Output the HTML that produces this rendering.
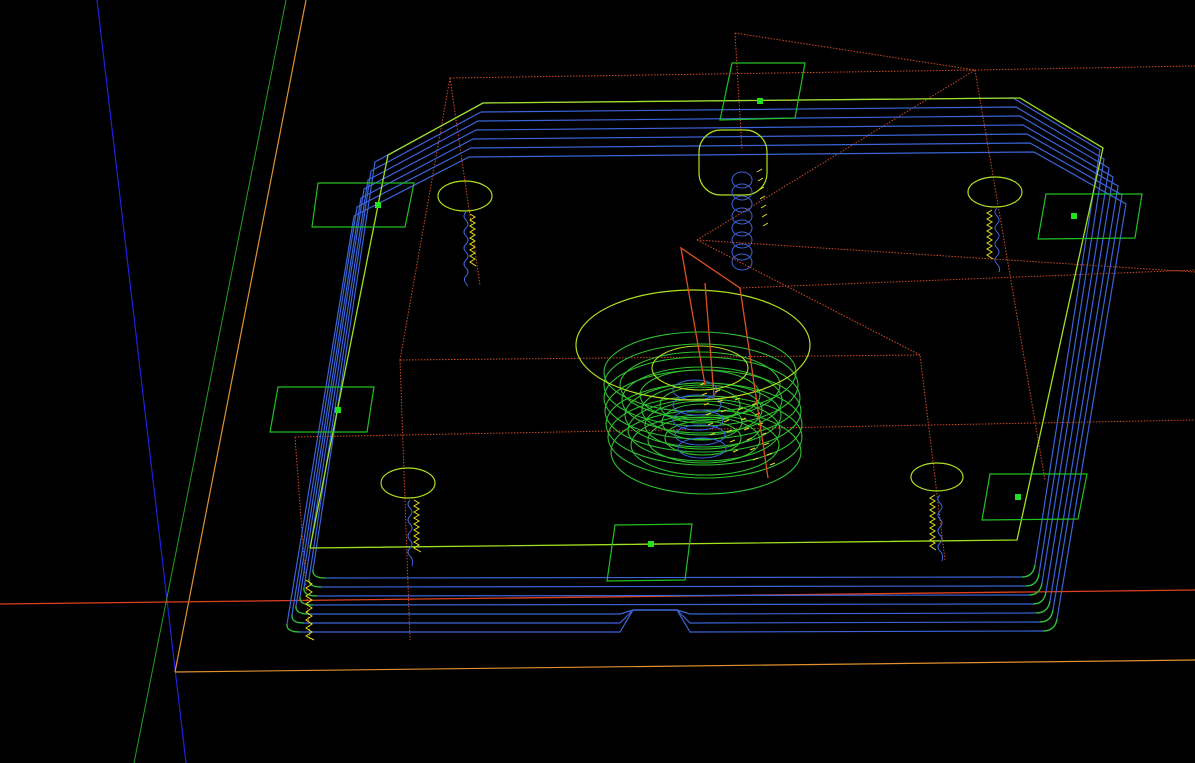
<!DOCTYPE html>
<html><head><meta charset="utf-8"><style>html,body{margin:0;padding:0;background:#000;overflow:hidden}svg{display:block}</style></head>
<body>
<svg width="1195" height="763" viewBox="0 0 1195 763" xmlns="http://www.w3.org/2000/svg" fill="none">
<!-- axes -->
<line x1="97" y1="0" x2="186" y2="763" stroke="#2020e0" stroke-width="1.2"/>
<line x1="286" y1="0" x2="134" y2="763" stroke="#20a020" stroke-width="1"/>
<line x1="306" y1="0" x2="175" y2="672" stroke="#e09030" stroke-width="1.2"/>
<line x1="175" y1="672" x2="1195" y2="660" stroke="#e09030" stroke-width="1.2"/>
<!-- stock dotted -->
<g stroke="#d04a20" stroke-width="1" stroke-dasharray="1.5 1.5">
<polyline points="450,78 975,70 1195,66"/>
<line x1="450" y1="78" x2="400" y2="360"/>
<line x1="450" y1="78" x2="480" y2="285"/>
<polyline points="400,360 920,355"/>
<line x1="975" y1="70" x2="1045" y2="480"/>
<line x1="735" y1="33" x2="975" y2="70"/>
<line x1="735" y1="33" x2="742" y2="150"/>
<polyline points="697,240 975,70"/>
<polyline points="697,240 920,355 945,560"/>
<line x1="697" y1="240" x2="1195" y2="272"/>
<line x1="740" y1="288" x2="1195" y2="270"/>
<line x1="295" y1="437" x2="1195" y2="420"/>
<line x1="295" y1="437" x2="310" y2="640"/>
<line x1="400" y1="360" x2="410" y2="640"/>
</g>
<line x1="0" y1="604" x2="1195" y2="590" stroke="#e04020" stroke-width="1.3"/>
<!-- contour layers -->
<g stroke="#3a64d8" stroke-width="1.2">
<path d="M483,103 L1013,98 L1100,150 L1035,565 Q1033,577 1022,577 L325,578 Q312,578 313,570 L375,162 Z"/>
<path d="M481,112 L1016,107 L1104,159 L1039,574 Q1037,586 1026,586 L321,587 Q308,587 309,579 L371,171 Z"/>
<path d="M478,121 L1020,116 L1109,168 L1042,583 Q1040,595 1029,595 L317,596 Q303,596 304,588 L368,180 Z"/>
<path d="M476,130 L1023,125 L1113,177 L1046,592 Q1044,604 1033,604 L313,605 Q299,605 300,597 L364,189 Z"/>
<path d="M473,139 L1027,134 L1118,186 L1050,601 Q1048,613 1036,613 L690,614 L677,610 L633,610 L620,614 L309,614 Q295,614 296,606 L361,198 Z"/>
<path d="M471,148 L1030,143 L1122,195 L1053,610 Q1051,622 1040,622 L690,623 L677,610 L633,610 L620,623 L304,623 Q291,623 292,615 L357,207 Z"/>
<path d="M469,157 L1034,152 L1126,204 L1057,619 Q1055,631 1043,631 L690,632 L677,610 L633,610 L620,632 L300,632 Q286,632 287,624 L354,216 Z"/>
</g>
<!-- green corners -->
<g stroke="#30c030" stroke-width="1.3">
<path d="M1022,577 Q1033,577 1035,565"/><path d="M1026,586 Q1037,586 1039,574"/><path d="M1029,595 Q1040,595 1042,583"/><path d="M1033,604 Q1044,604 1046,592"/><path d="M1036,613 Q1048,613 1050,601"/><path d="M1040,622 Q1051,622 1053,610"/><path d="M1043,631 Q1055,631 1057,619"/>
<path d="M325,578 Q312,578 313,570"/><path d="M321,587 Q308,587 309,579"/><path d="M317,596 Q303,596 304,588"/><path d="M313,605 Q299,605 300,597"/><path d="M309,614 Q295,614 296,606"/><path d="M304,623 Q291,623 292,615"/><path d="M300,632 Q286,632 287,624"/>
</g>
<polyline points="306,580 312,584 306,588 312,592 306,596 312,600 306,604 312,608 306,612 312,616 306,620 312,624 306,628 312,632 306,636 314,640" stroke="#e0e020" stroke-width="1"/>
<!-- top profile yellow-green -->
<path d="M310,548 L1017,540 L1103,148 L1020,98 L483,103 L388,155 L310,548" stroke="#a0e020" stroke-width="1.3"/>
<!-- tabs -->
<g stroke="#20c020" stroke-width="1.2">
<polygon points="732,63 805,63 795,118 720,120"/>
<polygon points="318,183 414,183 405,227 312,227"/>
<polygon points="1046,194 1142,194 1135,238 1038,239"/>
<polygon points="278,387 374,387 367,432 270,432"/>
<polygon points="990,474 1087,474 1078,519 982,520"/>
<polygon points="615,525 692,524 685,580 607,581"/>
</g>
<g fill="#20e020">
<rect x="757" y="98" width="6" height="6"/><rect x="375" y="202" width="6" height="6"/><rect x="1071" y="213" width="6" height="6"/><rect x="335" y="407" width="6" height="6"/><rect x="1015" y="494" width="6" height="6"/><rect x="648" y="541" width="6" height="6"/>
</g>
<!-- drill ellipses -->
<g stroke="#b0e020" stroke-width="1.2">
<ellipse cx="465" cy="196" rx="27" ry="15"/>
<ellipse cx="995" cy="192" rx="27" ry="15"/>
<ellipse cx="408" cy="483" rx="27" ry="15"/>
<ellipse cx="937" cy="477" rx="26" ry="14"/>
<rect x="699" y="130" width="68" height="65" rx="22"/>
</g>
<g stroke="#3a64d8" stroke-width="1">
<path d="M466,212 q-4,4 0,8 q4,4 0,8 q-4,4 0,8 q4,4 0,8 q-4,4 0,8 q4,4 0,8 q-4,4 0,8 q4,4 0,8 q-4,4 2,10"/>
<path d="M997,208 q-4,4 0,8 q4,4 0,8 q-4,4 0,8 q4,4 0,8 q-4,4 0,8 q4,4 0,8 q-4,4 0,8 q4,4 2,8"/>
<path d="M410,500 q-4,4 0,8 q4,4 0,8 q-4,4 0,8 q4,4 0,8 q-4,4 0,8 q4,4 0,8 q-4,4 0,8 q4,4 2,10"/>
<path d="M940,495 q-4,4 0,8 q4,4 0,8 q-4,4 0,8 q4,4 0,8 q-4,4 0,8 q4,4 0,8 q-4,4 0,8 q4,4 2,10"/>
<ellipse cx="742" cy="180" rx="10" ry="8"/><ellipse cx="742" cy="192" rx="10" ry="8"/><ellipse cx="742" cy="204" rx="10" ry="8"/><ellipse cx="742" cy="216" rx="10" ry="8"/><ellipse cx="742" cy="228" rx="10" ry="8"/><ellipse cx="742" cy="240" rx="10" ry="8"/><ellipse cx="742" cy="252" rx="10" ry="8"/><ellipse cx="742" cy="262" rx="10" ry="8"/>
</g>
<g stroke="#e0e020" stroke-width="1">
<path d="M470,214 l5,3 l-5,3 l5,3 l-5,3 l5,3 l-5,3 l5,3 l-5,3 l5,3 l-5,3 l5,3 l-5,3 l5,3 l-5,3 l5,3 l-5,3 l6,4"/>
<path d="M992,210 l-5,3 l5,3 l-5,3 l5,3 l-5,3 l5,3 l-5,3 l5,3 l-5,3 l5,3 l-5,3 l5,3 l-5,3 l5,3 l-5,3 l6,4"/>
<path d="M414,500 l5,3 l-5,3 l5,3 l-5,3 l5,3 l-5,3 l5,3 l-5,3 l5,3 l-5,3 l5,3 l-5,3 l5,3 l-5,3 l5,3 l-5,3 l7,4"/>
<path d="M935,495 l-5,3 l5,3 l-5,3 l5,3 l-5,3 l5,3 l-5,3 l5,3 l-5,3 l5,3 l-5,3 l5,3 l-5,3 l5,3 l-5,3 l5,3 l-5,3 l6,4"/>
<path d="M757,172 l5,-3 m-4,12 l5,-3 m-4,12 l5,-3 m-4,12 l5,-3 m-4,12 l5,-3 m-4,12 l5,-3 m-4,12 l5,-3"/>
</g>
<!-- pocket -->
<g stroke="#30c030" stroke-width="1.1">
<ellipse cx="700" cy="372" rx="96" ry="40"/>
<ellipse cx="701" cy="385" rx="97" ry="41"/>
<ellipse cx="702" cy="398" rx="98" ry="41"/>
<ellipse cx="703" cy="411" rx="98" ry="41"/>
<ellipse cx="704" cy="424" rx="98" ry="41"/>
<ellipse cx="705" cy="437" rx="97" ry="41"/>
<ellipse cx="706" cy="452" rx="95" ry="42"/>
<ellipse cx="700" cy="385" rx="80" ry="33"/>
<ellipse cx="702" cy="400" rx="80" ry="33"/>
<ellipse cx="703" cy="415" rx="78" ry="32"/>
<ellipse cx="704" cy="430" rx="76" ry="31"/>
<ellipse cx="705" cy="445" rx="74" ry="30"/>
<ellipse cx="700" cy="395" rx="60" ry="25"/>
<ellipse cx="702" cy="410" rx="60" ry="25"/>
<ellipse cx="703" cy="425" rx="58" ry="24"/>
<ellipse cx="704" cy="440" rx="56" ry="23"/>
<ellipse cx="700" cy="405" rx="40" ry="18"/>
<ellipse cx="702" cy="422" rx="40" ry="18"/>
<ellipse cx="703" cy="438" rx="38" ry="17"/>
</g>
<g stroke="#3a64d8" stroke-width="1"><ellipse cx="695" cy="390" rx="22" ry="10"/><ellipse cx="697" cy="405" rx="24" ry="10"/><ellipse cx="698" cy="420" rx="25" ry="10"/><ellipse cx="700" cy="435" rx="25" ry="10"/><ellipse cx="702" cy="448" rx="24" ry="10"/></g>
<ellipse cx="693" cy="345" rx="117" ry="55" stroke="#b0e020" stroke-width="1.2"/>
<ellipse cx="700" cy="368" rx="48" ry="22" stroke="#b0e020" stroke-width="1.1"/>
<g stroke="#e0e020" stroke-width="1">
<path d="M700,385 l5,-2 m-3,12 l5,-2 m-3,12 l5,-2 m-3,12 l5,-2 m-3,12 l5,-2 m-3,12 l5,-2"/>
<path d="M715,392 l5,-2 m-2,12 l5,-2 m-2,12 l5,-2 m-2,12 l5,-2 m-2,12 l5,-2 m-2,12 l5,-2 m-2,12 l5,-2"/>
<path d="M735,400 l5,-2 m-2,12 l5,-2 m-2,12 l5,-2 m-2,12 l5,-2 m-2,12 l5,-2 m-2,12 l5,-2 m-2,12 l5,-2"/>
<path d="M752,405 l5,-2 m-2,12 l5,-2 m-2,12 l5,-2 m-2,12 l5,-2 m-2,12 l5,-2 m-2,12 l5,-2 m-2,12 l5,-2"/>
</g>
<g stroke="#e05020" stroke-width="1.3">
<polyline points="705,385 681,248 740,288 768,478"/>
<line x1="705" y1="283" x2="714" y2="396"/>
</g>
</svg>
</body></html>
